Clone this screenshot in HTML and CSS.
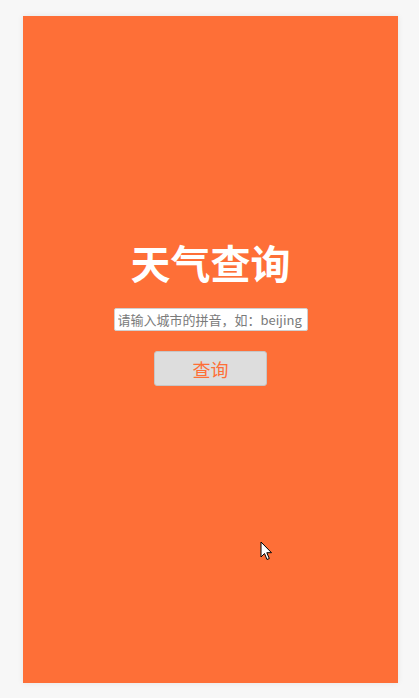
FILE: index.html
```html
<!DOCTYPE html>
<html lang="zh">
<head>
<meta charset="utf-8">
<title>天气查询</title>
<link rel="stylesheet" href="styles.css">
</head>
<body>
<div class="page">
  <main class="panel">
    <h1 class="title">天气查询</h1>
    <input class="city" type="text" placeholder="请输入城市的拼音，如：beijing">
    <button class="query" type="button">查询</button>
    <svg class="cursor" width="13" height="20" viewBox="0 0 13 20"><path d="M1 1 L1 16 L4.5 12.5 L7 18.5 L9.3 17.5 L6.8 11.7 L11.5 11.7 Z" fill="#fff" stroke="#000" stroke-width="1" stroke-linejoin="miter"/></svg>
  </main>
</div>
</body>
</html>
```

FILE: styles.css
```css
html, body {
  margin: 0;
  padding: 0;
  background: #f7f7f7;
  font-family: "Noto Sans CJK SC", "Noto Sans", sans-serif;
}
.page {
  padding: 16px 0 15px 23px;
}
.panel {
  position: relative;
  width: 375px;
  height: 667px;
  box-sizing: border-box;
  background: #fe6f37;
  box-shadow: 0 0 6px rgba(0, 0, 0, 0.08);
  display: flex;
  flex-direction: column;
  align-items: center;
  padding-top: 221px;
}
.title {
  margin: 0;
  font-size: 40px;
  line-height: 50px;
  font-weight: 700;
  color: #fff;
  letter-spacing: 0;
}
.city {
  margin-top: 21px;
  width: 194px;
  height: 23px;
  box-sizing: border-box;
  border: 1px solid #d0d0d0;
  border-radius: 2px;
  padding: 0 3px;
  font-family: "Noto Sans CJK SC", "Noto Sans", sans-serif;
  font-size: 13px;
  color: #333;
  background: #fff;
  outline: none;
}
.city::placeholder {
  color: #7a7a7a;
}
.query {
  margin-top: 20px;
  width: 113px;
  height: 35px;
  box-sizing: border-box;
  border: 1px solid #c6c6c6;
  border-radius: 3px;
  background: #dddddd;
  color: #fe6f37;
  font-family: "Noto Sans CJK SC", "Noto Sans", sans-serif;
  font-size: 18px;
  padding: 0;
}
.cursor {
  position: absolute;
  left: 237px;
  top: 525px;
}
```
